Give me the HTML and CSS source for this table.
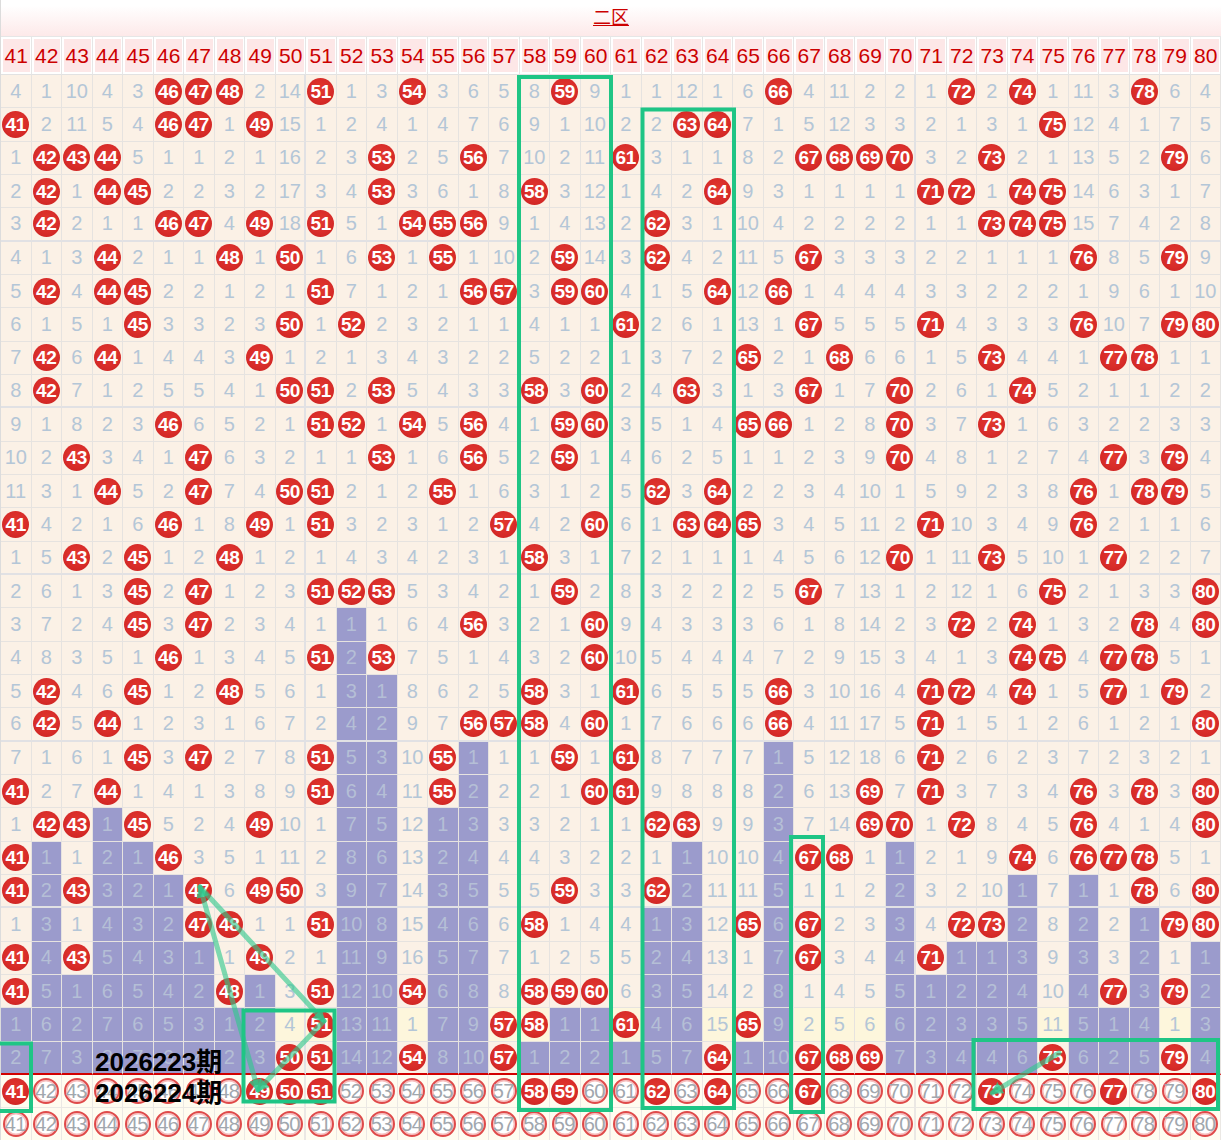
FILE: index.html
```html
<!DOCTYPE html>
<html lang="zh">
<head>
<meta charset="utf-8">
<title>二区走势</title>
<link rel="stylesheet" href="styles.css">
</head>
<body>
<div class="chart">
  <div class="zone-title"><span>二区</span></div>
  <div class="grid" id="grid"></div>
  <div class="period p1">2026223期</div>
  <div class="period p2">2026224期</div>
  <svg class="marks" width="1223" height="1140" viewBox="0 0 1223 1140">
    <defs>
      <marker id="ah" viewBox="0 0 10 10" refX="8" refY="5" markerWidth="2.6" markerHeight="2.6" orient="auto-start-reverse">
        <path d="M0,0 L10,5 L0,10 z" class="ahead"/>
      </marker>
    </defs>
    <g class="links">
      <line x1="200" y1="887" x2="258" y2="1090" marker-start="url(#ah)" marker-end="url(#ah)"/>
      <line x1="200" y1="887" x2="324" y2="1021" marker-end="url(#ah)"/>
      <line x1="324" y1="1021" x2="258" y2="1090" marker-end="url(#ah)"/>
      <line x1="1059" y1="1053" x2="992" y2="1093" marker-end="url(#ah)"/>
    </g>
    <g class="boxes">
      <rect x="519" y="77" width="92" height="1033"/>
      <rect x="642.5" y="109.5" width="91.5" height="998.5"/>
      <rect x="791" y="837" width="32" height="275"/>
      <rect x="-10" y="1043.5" width="41" height="67.5"/>
      <rect x="243.5" y="1010.5" width="91" height="91"/>
      <rect x="973.5" y="1040" width="244.5" height="69"/>
    </g>
  </svg>
</div>
<script src="script.js"></script>
</body>
</html>
```

FILE: styles.css
```css
html, body {
  margin: 0;
  padding: 0;
  background: #ffffff;
}

body {
  font-family: "Liberation Sans", Arial, "Noto Sans CJK SC", sans-serif;
  overflow: hidden;
}

.chart {
  position: relative;
  width: 1220px;
  border-left: 1px solid #dcdcdc;
}

.zone-title {
  height: 36px;
  border-bottom: 1px solid #e6e6e6;
  background: linear-gradient(#ffffff 0%, #ffffff 15%, #fde9e9 100%);
  text-align: center;
  font-size: 18px;
  line-height: 36px;
  color: #cc0000;
  font-family: "Liberation Sans", "Noto Sans CJK SC", sans-serif;
}

.zone-title span {
  text-decoration: underline;
}

.grid {
  display: grid;
  grid-template-columns: repeat(40, 30.5px);
  grid-template-rows: 38px repeat(32, 33.333px);
}

.hcell {
  box-sizing: border-box;
  border-right: 1px solid #e6e6e6;
  border-bottom: 1px solid #e2e2e2;
  padding: 2px 1px 2px 2px;
  background: #ffffff;
}

.hcell span {
  display: flex;
  height: 100%;
  align-items: center;
  justify-content: center;
  background: #fde7e7;
  color: #cc0000;
  font-size: 21px;
}

.cell {
  box-sizing: border-box;
  border-right: 1px solid #e6e3e0;
  border-bottom: 1px solid #e6e3e0;
  background: #fbf1e6;
  color: #b4c6d7;
  font-size: 20px;
  display: flex;
  align-items: center;
  justify-content: center;
  white-space: nowrap;
}

.cell.b10 {
  border-right: 2px solid #e1e1e4;
}

.cell.r5 {
  border-bottom: 2px solid #e1e1e4;
}

.cell.rl {
  border-bottom: 2px solid #d20000;
}

.cell.p {
  background: #9b9bcc;
  color: #b5bfd6;
}

.cell.hl {
  background: #fdf6dc;
}

.cell.f {
  background: #fffcf0;
  border-right-color: #ebe8e4;
  border-bottom-color: #ebe8e4;
}

.ball {
  display: block;
  width: 27px;
  height: 27px;
  border-radius: 50%;
  background: radial-gradient(circle at 50% 42%, #e2382f 0%, #d82c29 55%, #c81f1f 100%);
  color: #ffffff;
  font-weight: bold;
  font-size: 19px;
  line-height: 27px;
  text-align: center;
  letter-spacing: -0.3px;
}

.ring {
  display: block;
  box-sizing: border-box;
  width: 26px;
  height: 26px;
  border-radius: 50%;
  border: 2px solid #df4a4a;
  box-shadow: inset 0 0 0 1.5px #f6c0c0;
  background: #ffffff;
  color: #a1a7ae;
  font-size: 20px;
  line-height: 22px;
  text-align: center;
  letter-spacing: -0.5px;
  text-indent: -1px;
}

.period {
  position: absolute;
  left: 94px;
  font-weight: bold;
  font-size: 26px;
  line-height: 26px;
  color: #000000;
  white-space: nowrap;
  font-family: "Liberation Sans", "Noto Sans CJK SC", sans-serif;
}

.p1 {
  top: 1049px;
}

.p2 {
  top: 1080px;
}

.marks {
  position: absolute;
  left: -1px;
  top: 0;
  overflow: visible;
  pointer-events: none;
}

.links line {
  stroke: rgba(46, 200, 140, 0.62);
  stroke-width: 5;
  stroke-linecap: round;
}

.ahead {
  fill: rgba(46, 200, 140, 0.75);
}

.boxes rect {
  fill: none;
  stroke: #1fc585;
  stroke-width: 4;
}
```

FILE: script.js
```js
(function () {
  var R = [
    "4 1 10 4 3 * * * 2 14 * 1 3 * 3 6 5 8 * 9 1 1 12 1 6 * 4 11 2 2 1 * 2 * 1 11 3 * 6 4",
    "* 2 11 5 4 * * 1 * 15 1 2 4 1 4 7 6 9 1 10 2 2 * * 7 1 5 12 3 3 2 1 3 1 * 12 4 1 7 5",
    "1 * * * 5 1 1 2 1 16 2 3 * 2 5 * 7 10 2 11 * 3 1 1 8 2 * * * * 3 2 * 2 1 13 5 2 * 6",
    "2 * 1 * * 2 2 3 2 17 3 4 * 3 6 1 8 * 3 12 1 4 2 * 9 3 1 1 1 1 * * 1 * * 14 6 3 1 7",
    "3 * 2 1 1 * * 4 * 18 * 5 1 * * * 9 1 4 13 2 * 3 1 10 4 2 2 2 2 1 1 * * * 15 7 4 2 8",
    "4 1 3 * 2 1 1 * 1 * 1 6 * 1 * 1 10 2 * 14 3 * 4 2 11 5 * 3 3 3 2 2 1 1 1 * 8 5 * 9",
    "5 * 4 * * 2 2 1 2 1 * 7 1 2 1 * * 3 * * 4 1 5 * 12 * 1 4 4 4 3 3 2 2 2 1 9 6 1 10",
    "6 1 5 1 * 3 3 2 3 * 1 * 2 3 2 1 1 4 1 1 * 2 6 1 13 1 * 5 5 5 * 4 3 3 3 * 10 7 * *",
    "7 * 6 * 1 4 4 3 * 1 2 1 3 4 3 2 2 5 2 2 1 3 7 2 * 2 1 * 6 6 1 5 * 4 4 1 * * 1 1",
    "8 * 7 1 2 5 5 4 1 * * 2 * 5 4 3 3 * 3 * 2 4 * 3 1 3 * 1 7 * 2 6 1 * 5 2 1 1 2 2",
    "9 1 8 2 3 * 6 5 2 1 * * 1 * 5 * 4 1 * * 3 5 1 4 * * 1 2 8 * 3 7 * 1 6 3 2 2 3 3",
    "10 2 * 3 4 1 * 6 3 2 1 1 * 1 6 * 5 2 * 1 4 6 2 5 1 1 2 3 9 * 4 8 1 2 7 4 * 3 * 4",
    "11 3 1 * 5 2 * 7 4 * * 2 1 2 * 1 6 3 1 2 5 * 3 * 2 2 3 4 10 1 5 9 2 3 8 * 1 * * 5",
    "* 4 2 1 6 * 1 8 * 1 * 3 2 3 1 2 * 4 2 * 6 1 * * * 3 4 5 11 2 * 10 3 4 9 * 2 1 1 6",
    "1 5 * 2 * 1 2 * 1 2 1 4 3 4 2 3 1 * 3 1 7 2 1 1 1 4 5 6 12 * 1 11 * 5 10 1 * 2 2 7",
    "2 6 1 3 * 2 * 1 2 3 * * * 5 3 4 2 1 * 2 8 3 2 2 2 5 * 7 13 1 2 12 1 6 * 2 1 3 3 *",
    "3 7 2 4 * 3 * 2 3 4 1 1 1 6 4 * 3 2 1 * 9 4 3 3 3 6 1 8 14 2 3 * 2 * 1 3 2 * 4 *",
    "4 8 3 5 1 * 1 3 4 5 * 2 * 7 5 1 4 3 2 * 10 5 4 4 4 7 2 9 15 3 4 1 3 * * 4 * * 5 1",
    "5 * 4 6 * 1 2 * 5 6 1 3 1 8 6 2 5 * 3 1 * 6 5 5 5 * 3 10 16 4 * * 4 * 1 5 * 1 * 2",
    "6 * 5 * 1 2 3 1 6 7 2 4 2 9 7 * * * 4 * 1 7 6 6 6 * 4 11 17 5 * 1 5 1 2 6 1 2 1 *",
    "7 1 6 1 * 3 * 2 7 8 * 5 3 10 * 1 1 1 * 1 * 8 7 7 7 1 5 12 18 6 * 2 6 2 3 7 2 3 2 1",
    "* 2 7 * 1 4 1 3 8 9 * 6 4 11 * 2 2 2 1 * * 9 8 8 8 2 6 13 * 7 * 3 7 3 4 * 3 * 3 *",
    "1 * * 1 * 5 2 4 * 10 1 7 5 12 1 3 3 3 2 1 1 * * 9 9 3 7 14 * * 1 * 8 4 5 * 4 1 4 *",
    "* 1 1 2 1 * 3 5 1 11 2 8 6 13 2 4 4 4 3 2 2 1 1 10 10 4 * * 1 1 2 1 9 * 6 * * * 5 1",
    "* 2 * 3 2 1 * 6 * * 3 9 7 14 3 5 5 5 * 3 3 * 2 11 11 5 1 1 2 2 3 2 10 1 7 1 1 * 6 *",
    "1 3 1 4 3 2 * * 1 1 * 10 8 15 4 6 6 * 1 4 4 1 3 12 * 6 * 2 3 3 4 * * 2 8 2 2 1 * *",
    "* 4 * 5 4 3 1 1 * 2 1 11 9 16 5 7 7 1 2 5 5 2 4 13 1 7 * 3 4 4 * 1 1 3 9 3 3 2 1 1",
    "* 5 1 6 5 4 2 * 1 3 * 12 10 * 6 8 8 * * * 6 3 5 14 2 8 1 4 5 5 1 2 2 4 10 4 * 3 * 2",
    "1 6 2 7 6 5 3 1 2 4 * 13 11 1 7 9 * * 1 1 * 4 6 15 * 9 2 5 6 6 2 3 3 5 11 5 1 4 1 3",
    "2 7 3 8 7 6 4 2 3 * * 14 12 * 8 10 * 1 2 2 1 5 7 * 1 10 * * * 7 3 4 4 6 * 6 2 5 * 4"
  ];
  var N = 40;
  var HL = 28;
  var pred = [41, 49, 50, 51, 58, 59, 62, 64, 67, 73, 77, 80];
  var data = R.map(function (s) { return s.trim().split(/\s+/); });
  var last = [];
  for (var k = 0; k < N; k++) { last.push(-1); }
  data.forEach(function (r, i) {
    r.forEach(function (v, j) { if (v === "*") { last[j] = i; } });
  });

  var html = "";
  for (var j = 0; j < N; j++) {
    html += '<div class="hcell"><span>' + (41 + j) + "</span></div>";
  }

  data.forEach(function (r, i) {
    for (var j = 0; j < N; j++) {
      var v = r[j];
      var cls = "cell";
      if (j % 10 === 9 && j !== N - 1) { cls += " b10"; }
      if (i === data.length - 1) { cls += " rl"; }
      else if (i % 5 === 4) { cls += " r5"; }
      var inner;
      if (v === "*") {
        inner = '<span class="ball">' + (41 + j) + "</span>";
        if (i === HL) { cls += " hl"; }
      } else {
        inner = v;
        if (i > last[j]) { cls += " p"; }
        else if (i === HL) { cls += " hl"; }
      }
      html += '<div class="' + cls + '">' + inner + "</div>";
    }
  });

  for (var fr = 0; fr < 2; fr++) {
    for (var j2 = 0; j2 < N; j2++) {
      var num = 41 + j2;
      var c2 = "cell f";
      if (j2 % 10 === 9 && j2 !== N - 1) { c2 += " b10"; }
      var isBall = fr === 0 && pred.indexOf(num) !== -1;
      var in2 = isBall
        ? '<span class="ball">' + num + "</span>"
        : '<span class="ring">' + num + "</span>";
      html += '<div class="' + c2 + '">' + in2 + "</div>";
    }
  }

  document.getElementById("grid").innerHTML = html;
})();
```
